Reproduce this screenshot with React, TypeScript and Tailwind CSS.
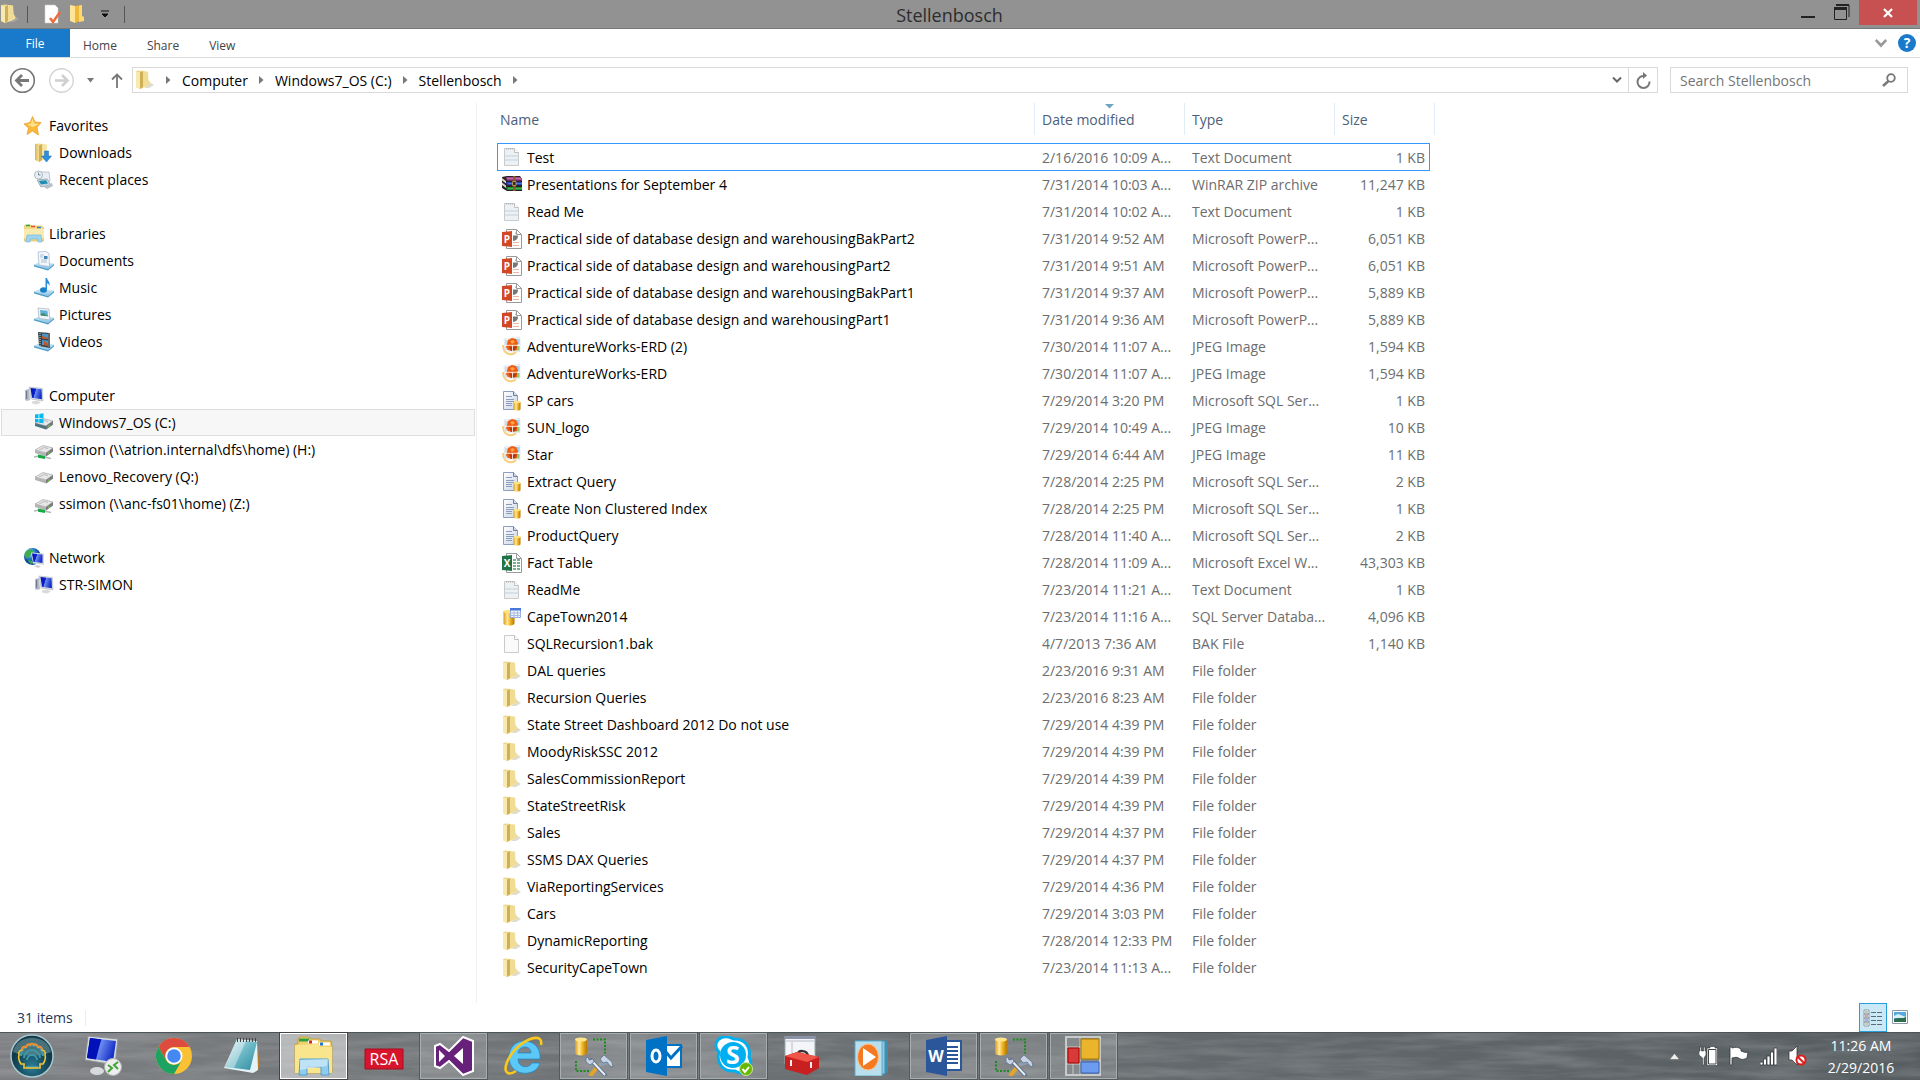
import type { ReactNode } from "react"

type FileKind = "text" | "rar" | "ppt" | "jpeg" | "sql" | "excel" | "database" | "blank" | "folder"

type FileRow = {
    name: string
    date: string
    type: string
    size: string
    kind: FileKind
}

const file = (kind: FileKind, name: string, date: string, type: string, size = ""): FileRow => ({ kind, name, date, type, size })

const files: FileRow[] = [
    file("text", "Test", "2/16/2016 10:09 A...", "Text Document", "1 KB"),
    file("rar", "Presentations for September 4", "7/31/2014 10:03 A...", "WinRAR ZIP archive", "11,247 KB"),
    file("text", "Read Me", "7/31/2014 10:02 A...", "Text Document", "1 KB"),
    file("ppt", "Practical side of database design and warehousingBakPart2", "7/31/2014 9:52 AM", "Microsoft PowerP...", "6,051 KB"),
    file("ppt", "Practical side of database design and warehousingPart2", "7/31/2014 9:51 AM", "Microsoft PowerP...", "6,051 KB"),
    file("ppt", "Practical side of database design and warehousingBakPart1", "7/31/2014 9:37 AM", "Microsoft PowerP...", "5,889 KB"),
    file("ppt", "Practical side of database design and warehousingPart1", "7/31/2014 9:36 AM", "Microsoft PowerP...", "5,889 KB"),
    file("jpeg", "AdventureWorks-ERD (2)", "7/30/2014 11:07 A...", "JPEG Image", "1,594 KB"),
    file("jpeg", "AdventureWorks-ERD", "7/30/2014 11:07 A...", "JPEG Image", "1,594 KB"),
    file("sql", "SP cars", "7/29/2014 3:20 PM", "Microsoft SQL Ser...", "1 KB"),
    file("jpeg", "SUN_logo", "7/29/2014 10:49 A...", "JPEG Image", "10 KB"),
    file("jpeg", "Star", "7/29/2014 6:44 AM", "JPEG Image", "11 KB"),
    file("sql", "Extract Query", "7/28/2014 2:25 PM", "Microsoft SQL Ser...", "2 KB"),
    file("sql", "Create Non Clustered Index", "7/28/2014 2:25 PM", "Microsoft SQL Ser...", "1 KB"),
    file("sql", "ProductQuery", "7/28/2014 11:40 A...", "Microsoft SQL Ser...", "2 KB"),
    file("excel", "Fact Table", "7/28/2014 11:09 A...", "Microsoft Excel W...", "43,303 KB"),
    file("text", "ReadMe", "7/23/2014 11:21 A...", "Text Document", "1 KB"),
    file("database", "CapeTown2014", "7/23/2014 11:16 A...", "SQL Server Databa...", "4,096 KB"),
    file("blank", "SQLRecursion1.bak", "4/7/2013 7:36 AM", "BAK File", "1,140 KB"),
    file("folder", "DAL queries", "2/23/2016 9:31 AM", "File folder"),
    file("folder", "Recursion Queries", "2/23/2016 8:23 AM", "File folder"),
    file("folder", "State Street Dashboard 2012 Do not use", "7/29/2014 4:39 PM", "File folder"),
    file("folder", "MoodyRiskSSC 2012", "7/29/2014 4:39 PM", "File folder"),
    file("folder", "SalesCommissionReport", "7/29/2014 4:39 PM", "File folder"),
    file("folder", "StateStreetRisk", "7/29/2014 4:39 PM", "File folder"),
    file("folder", "Sales", "7/29/2014 4:37 PM", "File folder"),
    file("folder", "SSMS DAX Queries", "7/29/2014 4:37 PM", "File folder"),
    file("folder", "ViaReportingServices", "7/29/2014 4:36 PM", "File folder"),
    file("folder", "Cars", "7/29/2014 3:03 PM", "File folder"),
    file("folder", "DynamicReporting", "7/28/2014 12:33 PM", "File folder"),
    file("folder", "SecurityCapeTown", "7/23/2014 11:13 A...", "File folder"),
]

function Icon({ children }: { children: ReactNode }) {
    return <svg className="h-5 w-5 shrink-0" viewBox="0 0 20 20" aria-hidden="true">{children}</svg>
}

function Gradients() {
    return (
        <svg className="absolute h-0 w-0" aria-hidden="true">
            <defs>
                <linearGradient id="gold"><stop stopColor="#d99a10" /><stop offset=".35" stopColor="#ffe9a0" /><stop offset=".6" stopColor="#f3b92b" /><stop offset="1" stopColor="#b67600" /></linearGradient>
                <linearGradient id="folder"><stop stopColor="#d8b65a" /><stop offset=".3" stopColor="#f3dc8e" /><stop offset="1" stopColor="#f7e8ac" /></linearGradient>
                <linearGradient id="screen" x2="1" y2=".3"><stop stopColor="#0514b0" /><stop offset=".45" stopColor="#0a20d0" /><stop offset=".5" stopColor="#6d8cf0" /><stop offset="1" stopColor="#1630c8" /></linearGradient>
                <linearGradient id="tray" x2="0" y2="1"><stop stopColor="#d4ecf8" /><stop offset="1" stopColor="#7fbfe2" /></linearGradient>
                <linearGradient id="sheet" x2="1" y2="1"><stop stopColor="#ffffff" /><stop offset="1" stopColor="#c8d4e4" /></linearGradient>
                <linearGradient id="teal" x2="1" y2="1"><stop stopColor="#d8f3f7" /><stop offset=".5" stopColor="#6cb8c6" /><stop offset="1" stopColor="#2f8ba0" /></linearGradient>
                <radialGradient id="orb" cy=".75"><stop stopColor="#2c7f98" /><stop offset=".6" stopColor="#175064" /><stop offset="1" stopColor="#11394a" /></radialGradient>
                <radialGradient id="globe" cx=".35" cy=".3"><stop stopColor="#bfeaff" /><stop offset=".5" stopColor="#3694d8" /><stop offset="1" stopColor="#0b4a94" /></radialGradient>
            </defs>
        </svg>
    )
}

function FolderIcon() {
    return (
        <Icon>
            <path d="M13 11l6 4-5 3h-4z" fill="#b9b9b0" opacity=".5" />
            <path d="M1 1l4-.5 8 1 1 13.5-3 2-6 2-4-2z" fill="url(#folder)" />
            <path d="M1 1l4 1.5V19l-4-2z" fill="#f8e9ae" />
            <path d="M5 2.5L8 1v16l-3 2z" fill="#cfae58" />
            <path d="M8 1.5l5 .5v13l-5 2z" fill="#f0dc94" />
            <path d="M13 10c2 1 3 3 2 5l-3 1z" fill="#efdd9c" />
        </Icon>
    )
}

function ComputerIcon() {
    return (
        <Icon>
            <path d="M1 4l4-1 1 11-3 1-2-1z" fill="#b4bcc8" />
            <path d="M2 5l1.200-.3v8L2 13z" fill="#6e7b8c" />
            <path d="M5 1l13.500 1.500.5 12.500L7 13z" fill="#d5d9df" stroke="#a5adb8" strokeWidth=".5" />
            <path d="M6.500 2l11 1.300.5 10L8 11.700z" fill="url(#screen)" />
            <path d="M8 15.500l5-1 4 2-4 2-5-1z" fill="#dadada" />
        </Icon>
    )
}

function Tray() {
    return (
        <>
            <path d="M0 14l6-2.500L20 13l-6 5z" fill="url(#tray)" stroke="#9fd0ea" strokeWidth=".5" />
            <path d="M0 14l14 4 6-5v1.500l-6 5L0 15.500z" fill="#4d9cc8" />
        </>
    )
}

function Drive({ network = false, os = false }: { network?: boolean, os?: boolean }) {
    return (
        <Icon>
            {network && <path d="M0 17l5-1 12 2.500" stroke="#b4b4b4" strokeWidth="1.500" fill="none" />}
            <path d="M1 10l8-4.500L19 8l-7 5z" fill="#e6e6e6" stroke="#999" strokeWidth=".6" />
            <path d="M1 10l11 3 7-5v3.500l-7 5L1 13z" fill={os ? "#4b7480" : "#b4b4b4"} />
            <path d="M12 13l7-5v3.500l-7 5z" fill="#7c7c7c" />
            <path d="M5 10l5-2.500 4 1" stroke="#bdbdbd" fill="none" />
            <path d="M14 13l1.500-1v1.300l-1.500 1z" fill="#64d840" />
            {network && <path d="M4 14.500l7 1.500v3l-7-1.200z" fill="#18a845" />}
            {os && <path d="M1 1.500l3.500-.5v3.900H1zM5.300.9L9.500.3v4.600H5.300zM1 5.800h3.500v3.700L1 9zM5.300 5.800h4.200v4.500l-4.200-.6z" fill="#00bcf2" />}
        </Icon>
    )
}

function FileIcon({ kind }: { kind: FileKind }) {
    if (kind === "folder") return <FolderIcon />
    if (kind === "text" || kind === "blank") {
        return (
            <Icon>
                <path d="M2.500 1.500h10l4 4v13h-14z" fill={kind === "text" ? "#eef1f4" : "#fafafa"} stroke="#c8cacc" />
                <path d="M12.500 1.500v4h4" fill="#fff" stroke="#bdbfc2" />
                {kind === "text" && <path d="M3 8h13v2H3zM3 12h13v2H3z" fill="#d6e2ea" />}
                {kind === "text" && <path d="M4 2h8" stroke="#a5a9ad" strokeDasharray="1 1" />}
            </Icon>
        )
    }
    if (kind === "rar") {
        return (
            <Icon>
                <path d="M0 2l5-1h13l2 3v12H5L0 13z" fill="#2b2024" />
                <path d="M4 2h14l2 2v1.500H5z" fill="#a9408f" />
                <path d="M4 7h16v3H5z" fill="#2444c8" />
                <path d="M4 12h16v3H5z" fill="#16902c" />
                <path d="M5 3.500h14M6 8.500h14M6 13.500h14" stroke="#fff" strokeWidth=".5" opacity=".5" />
                <path d="M0 3l4 3v2.500L0 5.500zM0 7.500l4 3V13l-4-3z" fill="#d9d4cc" />
                <path d="M11 1h2.500v15H11z" fill="#8a5a2c" />
                <path d="M10.500 6.500h3.500v4h-3.500z" fill="#3a2716" stroke="#d8b45a" strokeWidth=".7" />
            </Icon>
        )
    }
    if (kind === "ppt" || kind === "excel") {
        const color = kind === "ppt" ? "#d24726" : "#217346"
        return (
            <Icon>
                <path d="M4.500.5h10l5 5v14h-15z" fill="#fff" stroke="#9a9a9a" />
                <path d="M14.500.5v5h5" fill="none" stroke="#9a9a9a" />
                {kind === "ppt" && (
                    <>
                        <path d="M11 12V6.500h5a5 5 0 0 1-5 5.500z" fill="#777" />
                        <path d="M13 5V2a3 3 0 0 0 3 3z" fill="#e8977f" />
                        <path d="M11 13.500h6M11 16.500h6" stroke="#f0b49f" />
                    </>
                )}
                {kind === "excel" && <path d="M11 7h3M15 7h3M11 10h3M15 10h3M11 13h3M15 13h3M11 16h3M15 16h3" stroke="#74b58e" strokeWidth="2" />}
                <path d="M0 3l10-1v16L0 17z" fill={color} />
                <text x="5" y="13.500" textAnchor="middle" fontSize="10" fontWeight="700" fill="#fff" fontFamily="Open Sans, sans-serif">{kind === "ppt" ? "P" : "X"}</text>
            </Icon>
        )
    }
    if (kind === "jpeg") {
        return (
            <Icon>
                <path d="M1 8c0 10 9 11 13 7" fill="none" stroke="#f7cf7c" strokeWidth="2" />
                <path d="M2 2l16-1.500v14L3 14z" fill="#f2f5f8" stroke="#d8dce0" strokeWidth=".6" />
                <path d="M12 2h5.500v5.500H12z" fill="#9fd0f2" />
                <path d="M12 9h5.500v4.500H12z" fill="#8cc870" />
                <path d="M3 3h5v5H3zM3 9h5v4H3z" fill="#cfdfe9" />
                <path d="M6 3l4-2 4 1 2 4-1 4 0 3-5 1-4-1-2-3 1-3z" fill="#ee5d12" />
                <path d="M7 9l3 1 5-1-2 4-4 1z" fill="#b03a10" />
                <path d="M3 8.300h15M10.500 8v6" stroke="#fff" strokeWidth=".8" />
                <path d="M8 4l3-1 2 2-3 2z" fill="#ffa04a" />
            </Icon>
        )
    }
    if (kind === "sql") {
        return (
            <Icon>
                <path d="M1.500.5h10l4 4v14h-14z" fill="url(#sheet)" stroke="#8d9fc0" />
                <path d="M11.500.5v4h4" fill="#d5e0f0" stroke="#6b7ea4" />
                <path d="M4 5.500h6M4 8.500h8M4 10.500h8M4 12.500h6M4 14.500h6" stroke="#8a9cc0" />
                <path d="M11.500 11v7a3.500 1.500 0 0 0 7 0v-7z" fill="url(#gold)" />
                <ellipse cx="15" cy="11" rx="3.500" ry="1.300" fill="#ffe27a" />
            </Icon>
        )
    }
    return (
        <Icon>
            <path d="M1.500 4v12.500a5.500 2 0 0 0 11 0V4z" fill="url(#gold)" />
            <ellipse cx="7" cy="4.500" rx="5.500" ry="1.800" fill="#ffe27a" />
            <path d="M8.500 1.500h10v9h-10z" fill="#eef3fb" stroke="#8fa8dc" />
            <path d="M8 1h11v2.500H8z" fill="#4878d8" />
            <path d="M8 6h11M8 8.500h11M12 3v8M15.500 3v8" stroke="#a9bce4" />
        </Icon>
    )
}

const starIcon = (
    <Icon>
        <path d="M8.500.5l2.500 5.500 6 .5-4 5 1.500 7.500L8.500 15 3 18.500 4.500 12 0 8l6-1.500z" fill="#fbb93c" stroke="#e79a1e" strokeWidth=".7" />
        <path d="M8.500 2.500L10 7.500l5 .5-6 3-6-2.500 4-1z" fill="#ffe28c" />
    </Icon>
)

const downloadsIcon = (
    <Icon>
        <path d="M1 1l4-.5 8 1v13.500l-8 4-4-2z" fill="url(#folder)" />
        <path d="M5 2.500L8 1v16l-3 2z" fill="#cfae58" />
        <path d="M10.500 8h4v5h3l-5 6-5-6h3z" fill="#2e8fdc" stroke="#1b6db4" strokeWidth=".5" />
    </Icon>
)

const recentIcon = (
    <Icon>
        <path d="M5 2h10l1 9H6z" fill="#e8eef3" stroke="#a8b5c0" strokeWidth=".7" />
        <path d="M3 10l10-1 4 6-10 2z" fill="#c8d6e2" stroke="#8797a6" strokeWidth=".7" />
        <path d="M5 11l7-.7 2 3.200-7 1z" fill="#1d8fb0" />
        <circle cx="4.500" cy="5" r="4" fill="#eaf2f8" stroke="#9aaab8" strokeWidth=".8" />
        <path d="M4.500 2.500V5h2" stroke="#5a6b7c" fill="none" strokeWidth=".8" />
        <path d="M10 17l8-4 1 3-6 3z" fill="#b9c0c6" />
    </Icon>
)

const librariesIcon = (
    <Icon>
        <path d="M0 3l1-2h6l1 1h10l2 2v13H0z" fill="#f3db85" stroke="#d9ba5c" strokeWidth=".6" />
        <path d="M2 1.500h4" stroke="#2ea043" strokeWidth="1.500" />
        <path d="M7 2.500h4" stroke="#e04a2f" strokeWidth="1.500" />
        <path d="M13 3.500h4" stroke="#3a7bd0" strokeWidth="1.500" />
        <path d="M0 5h20v9H0z" fill="#f9ebb0" />
        <path d="M2 18l1-7h14l1 7h-4l-.5-3h-7L6 18z" fill="#9fd4ee" stroke="#6ab4dc" strokeWidth=".6" />
    </Icon>
)

const documentsIcon = (
    <Icon><Tray /><path d="M4 1l8-.5 3 2 .5 13L5 14z" fill="#f4f8fc" stroke="#9fb3c8" strokeWidth=".7" /><path d="M6 4h4M6 6h3M7 9h6M7 11h6" stroke="#a9bdd0" /><path d="M10 5h3.500v3H10z" fill="#3f84b8" /></Icon>
)

const musicIcon = (
    <Icon><Tray /><ellipse cx="9.500" cy="12" rx="3.500" ry="2.800" fill="#1c7fc8" /><path d="M11.500 12V0h1.500c0 2 3.500 4 2.500 8-.5-2-1.500-2.500-2.500-2.500V12z" fill="#2a8fd6" /></Icon>
)

const picturesIcon = (
    <Icon><Tray /><path d="M4 3l11 1 1 11-11-1.500z" fill="#f0f4f8" stroke="#a0b0c0" strokeWidth=".7" /><path d="M6 5l7.500.8.600 5.700-7.500-1z" fill="#5fb0dc" /><path d="M6.500 9l3-1 4.500 3-7-.5z" fill="#3f8c5a" /></Icon>
)

const videosIcon = (
    <Icon><Tray /><path d="M4 0l12 1v15L5 14z" fill="#3b4148" /><path d="M8 1.500l6 .5v5l-6-.5zM8 8l6 .5v5L8 13z" fill="#4b94c8" /><path d="M8 4l6 2v1l-6-.5zM10 9l4 3v2l-4-1z" fill="#c4561e" /><path d="M6 1v13M15 1.500v13" stroke="#d0d4d8" strokeDasharray="1 1" /></Icon>
)

const networkIcon = (
    <Icon>
        <circle cx="8.500" cy="8.500" r="8.500" fill="url(#globe)" />
        <path d="M3 3c4-3 6-1 6 1S6 7 5 9s-3 1-4-1 0-4 2-5zM4 12l4 1 1 3c-2 0-4-1-5-4z" fill="#3fae49" />
        <path d="M7 4.500l13 1V17L9 15.500z" fill="#d5d9df" />
        <path d="M8 5.500l10.500 1V15L9.500 13.800z" fill="url(#screen)" />
        <path d="M10 18l4-1 3 1.500-3 1.500z" fill="#d0d0d0" />
    </Icon>
)

type NavItem = { label: string, icon: ReactNode, active?: boolean }
type NavGroup = NavItem & { items: NavItem[] }

const navigation: NavGroup[] = [
    { label: "Favorites", icon: starIcon, items: [{ label: "Downloads", icon: downloadsIcon }, { label: "Recent places", icon: recentIcon }] },
    {
        label: "Libraries", icon: librariesIcon, items: [
            { label: "Documents", icon: documentsIcon },
            { label: "Music", icon: musicIcon },
            { label: "Pictures", icon: picturesIcon },
            { label: "Videos", icon: videosIcon },
        ],
    },
    {
        label: "Computer", icon: <ComputerIcon />, items: [
            { label: "Windows7_OS (C:)", icon: <Drive os />, active: true },
            { label: "ssimon (\\\\atrion.internal\\dfs\\home) (H:)", icon: <Drive network /> },
            { label: "Lenovo_Recovery (Q:)", icon: <Drive /> },
            { label: "ssimon (\\\\anc-fs01\\home) (Z:)", icon: <Drive network /> },
        ],
    },
    { label: "Network", icon: networkIcon, items: [{ label: "STR-SIMON", icon: <ComputerIcon /> }] },
]

function TitleBar() {
    return (
        <header className="flex h-[29px] items-center border-b border-[#787878] bg-[#929292]">
            <div className="flex flex-1 items-center gap-[7px]">
                <FolderIcon />
                <span className="h-[17px] w-px bg-[#555]" />
                <button aria-label="Properties" className="ml-2">
                    <Icon><path d="M2 1h10l3 3v15H2z" fill="#fff" stroke="#ccc" strokeWidth=".6" /><path d="M7 14l3 4 7-10" fill="none" stroke="#ee6c3c" strokeWidth="2.500" /></Icon>
                </button>
                <button aria-label="New folder">
                    <Icon><path d="M0 1l5 1v17l-5-2z" fill="#ffe59a" /><path d="M5 2l7-1v15l-7 3z" fill="#efb93b" /><path d="M9 2l3-1v11l2 1v4l-5 1z" fill="#ffd970" /></Icon>
                </button>
                <button aria-label="Customize Quick Access Toolbar" className="px-1">
                    <svg width="8" height="8" viewBox="0 0 8 8"><path d="M0 1h8M1 4h6L4 7z" stroke="#111" fill="#111" /></svg>
                </button>
                <span className="ml-1 h-[17px] w-px bg-[#555]" />
            </div>
            <h1 className="mr-[18px] pt-px text-[18px] leading-6 text-[#2d2d2d]">Stellenbosch</h1>
            <div className="flex h-full flex-1 items-start justify-end pr-[3px]">
                <button aria-label="Minimize" className="flex h-[26px] w-[34px] items-center justify-center">
                    <svg width="14" height="16" viewBox="0 0 14 16"><path d="M0 11h14v2H0z" fill="#222" /></svg>
                </button>
                <button aria-label="Restore" className="flex h-6 w-[34px] items-center justify-center">
                    <svg width="16" height="16" viewBox="0 0 16 16"><path d="M2 1h13v12M.5 4v11.500h12V4z" stroke="#222" fill="none" /><path d="M2 0h13v2H2zM0 3h13v3H0z" fill="#222" /></svg>
                </button>
                <button aria-label="Close" className="flex h-[25px] w-[58px] items-center justify-center bg-[#c75050]">
                    <svg width="10" height="10" viewBox="0 0 10 10"><path d="M1 1l8 8M9 1L1 9" stroke="#fff" strokeWidth="2.200" /></svg>
                </button>
            </div>
        </header>
    )
}

function Ribbon() {
    return (
        <nav className="flex h-[29px] items-stretch border-b border-[#dadbdc] text-[12px] text-[#444]">
            <button className="w-[70px] bg-[#1979ca] pt-px text-white">File</button>
            <div className="flex flex-1 items-center gap-[30px] px-[13px] pt-[5px]">
                <button>Home</button>
                <button>Share</button>
                <button>View</button>
            </div>
            <div className="flex items-center gap-[11px] pr-1">
                <button aria-label="Expand the Ribbon">
                    <svg width="12" height="10" viewBox="0 0 12 10"><path d="M.8 2L6 7.500 11.200 2" fill="none" stroke="#999" strokeWidth="2.600" /></svg>
                </button>
                <button aria-label="Help" className="flex h-[18px] w-[18px] items-center justify-center rounded-full bg-[#1979ca] text-[14px] font-bold leading-[18px] text-white">?</button>
            </div>
        </nav>
    )
}

function CrumbArrow() {
    return <svg className="shrink-0" width="5" height="8" viewBox="0 0 5 8"><path d="M0 0v8l4.500-4z" fill="#777" /></svg>
}

function Crumb({ children }: { children: string }) {
    return (
        <>
            <a href="#" className="text-black">{children}</a>
            <CrumbArrow />
        </>
    )
}

function AddressBar() {
    return (
        <div className="flex h-11 items-center pr-3">
            <div className="flex w-[132px] shrink-0 items-center pl-[9px]">
                <button aria-label="Back">
                    <svg width="27" height="27" viewBox="0 0 27 27"><circle cx="13.500" cy="13.500" r="11.800" fill="none" stroke="#777" strokeWidth="1.600" /><path d="M20 13.500H9M13 8l-5.500 5.500L13 19" fill="none" stroke="#777" strokeWidth="2.800" /></svg>
                </button>
                <button aria-label="Forward" className="ml-3">
                    <svg width="27" height="27" viewBox="0 0 27 27"><circle cx="13.500" cy="13.500" r="11.800" fill="none" stroke="#d4d4d4" strokeWidth="1.400" /><path d="M7 13.500h11M14 8l5.500 5.500L14 19" fill="none" stroke="#d0d0d0" strokeWidth="2.600" /></svg>
                </button>
                <button aria-label="Recent locations" className="ml-3">
                    <svg width="7" height="5" viewBox="0 0 7 5"><path d="M0 0h7L3.500 4.500z" fill="#777" /></svg>
                </button>
                <button aria-label="Up" className="ml-[17px]">
                    <svg width="12" height="15" viewBox="0 0 12 15"><path d="M6 15V2M1 6.500L6 1.500l5 5" fill="none" stroke="#777" strokeWidth="1.800" /></svg>
                </button>
            </div>
            <div className="flex h-[26px] flex-1 items-center border border-[#d9d9d9]">
                <div className="flex flex-1 items-center gap-[11px] pl-[2px]">
                    <FolderIcon />
                    <CrumbArrow />
                    <Crumb>Computer</Crumb>
                    <Crumb>Windows7_OS (C:)</Crumb>
                    <Crumb>Stellenbosch</Crumb>
                </div>
                <button aria-label="Previous locations" className="px-[6px]">
                    <svg width="10" height="8" viewBox="0 0 10 8"><path d="M1 1.500l4 4 4-4" fill="none" stroke="#666" strokeWidth="2" /></svg>
                </button>
                <button aria-label="Refresh" className="flex h-full w-[29px] items-center justify-center border-l border-[#d9d9d9]">
                    <svg width="15" height="17" viewBox="0 0 15 17"><path d="M8.500 4a6 6 0 1 0 5 5.500" fill="none" stroke="#777" strokeWidth="2" /><path d="M7 0l4 3.500L7 7z" fill="#777" /></svg>
                </button>
            </div>
            <div className="ml-3 flex h-[26px] w-[238px] items-center border border-[#d9d9d9] pl-[9px] pr-[11px]">
                <input aria-label="Search Stellenbosch" placeholder="Search Stellenbosch" className="min-w-0 flex-1 bg-transparent outline-none placeholder:text-[#757575]" />
                <button aria-label="Search">
                    <svg width="14" height="14" viewBox="0 0 14 14"><circle cx="9" cy="5" r="3.800" fill="none" stroke="#777" strokeWidth="1.800" /><path d="M6.500 8L1 13" stroke="#777" strokeWidth="2.400" /></svg>
                </button>
            </div>
        </div>
    )
}

function Sidebar() {
    return (
        <aside className="flex w-[477px] shrink-0 flex-col gap-[27px] border-r border-[#f0f0f0] pt-[9px]">
            {navigation.map((group) => (
                <div key={group.label}>
                    <a href="#" className="flex h-[27px] items-center gap-[5px] pl-6">{group.icon}{group.label}</a>
                    {group.items.map((item) => (
                        <a href="#" key={item.label} className={item.active ? "mx-px flex h-[27px] items-center gap-[5px] border border-[#dedede] bg-[#f7f7f7] pl-8" : "flex h-[27px] items-center gap-[5px] pl-[34px]"}>
                            {item.icon}{item.label}
                        </a>
                    ))}
                </div>
            ))}
        </aside>
    )
}

function ColumnHeader({ label, sorted, span, first }: { label: string, sorted?: boolean, span?: number, first?: boolean }) {
    return (
        <th colSpan={span} className="relative h-10 p-0 align-top font-normal">
            <div className={first ? "flex h-8 items-center pl-[3px] text-left" : "flex h-8 items-center border-l border-[#e3edf7] pl-[7px] text-left"}>{label}</div>
            {sorted && <svg className="absolute left-[71px] top-[1px]" width="9" height="5" viewBox="0 0 9 5"><path d="M0 0h9L4.500 4.500z" fill="#6fa5c4" /></svg>}
        </th>
    )
}

function FileList() {
    return (
        <main className="min-w-0 flex-1 overflow-hidden pl-5">
            <table className="w-[938px] table-fixed border-separate border-spacing-0 whitespace-nowrap">
                <colgroup>
                    <col />
                    <col className="w-[150px]" />
                    <col className="w-[150px]" />
                    <col className="w-[96px]" />
                    <col className="w-[5px]" />
                </colgroup>
                <thead className="text-[#4c607a]">
                    <tr>
                        <ColumnHeader label="Name" first />
                        <ColumnHeader label="Date modified" sorted />
                        <ColumnHeader label="Type" />
                        <th colSpan={2} className="h-10 p-0 align-top font-normal">
                            <div className="flex h-8 items-center border-x border-[#e3edf7] pl-[7px]">Size</div>
                        </th>
                    </tr>
                </thead>
                <tbody className="text-[#6d6d6d]">
                    {files.map((row, i) => {
                        const line = i === 0 ? "border-y border-[#3399ff]" : "border-y border-transparent"
                        return (
                            <tr key={row.name} className={i === 0 ? "h-7" : "h-[27px]"}>
                                <td className={`${line} border-l p-0 pl-1 text-black`}>
                                    <a href="#" className="flex h-[25px] items-center gap-[5px]"><FileIcon kind={row.kind} />{row.name}</a>
                                </td>
                                <td className={`${line} p-0 pl-2`}>{row.date}</td>
                                <td className={`${line} p-0 pl-2`}>{row.type}</td>
                                <td className={`${line} border-r p-0 pr-1 text-right`}>{row.size}</td>
                                <td className="p-0" />
                            </tr>
                        )
                    })}
                </tbody>
            </table>
        </main>
    )
}

function StatusBar() {
    return (
        <footer className="flex h-[29px] items-center pl-[17px] pr-3 text-[#1e395b]">
            <span className="border-r border-[#ededed] pr-3 leading-4">31 items</span>
            <div className="ml-auto flex h-full items-center gap-[5px]">
                <button aria-label="Details view" className="flex h-[29px] w-7 items-center justify-center border border-[#26a0da] bg-[#cbe8f6]">
                    <svg width="20" height="18" viewBox="0 0 20 18">
                        <path d="M1 1h5v4H1zM1 5h5v4H1zM1 9h5v4H1zM1 13h5v4H1z" fill="#fff" stroke="#8c99a6" />
                        <path d="M2 3h3" stroke="#6aa84f" /><path d="M2 7h3" stroke="#d33" /><path d="M2 11h3" stroke="#36c" /><path d="M2 15h3" stroke="#8a4" />
                        <path d="M8 3.500h5M14 3.500h5M8 7.500h5M14 7.500h5M8 11.500h5M14 11.500h5M8 15.500h5M14 15.500h5" stroke="#5a6b78" />
                    </svg>
                </button>
                <button aria-label="Thumbnails view" className="pb-[2px]">
                    <svg width="16" height="14" viewBox="0 0 16 14"><path d="M.5.5h15v13H.5z" fill="#fff" stroke="#8c99a6" /><path d="M2 2h12v10H2z" fill="#58a8e0" /><path d="M2 6l4-2 8 3v1H2z" fill="#d9f0f8" /><path d="M2 9c5-2 8 0 12-2v5H2z" fill="#2c6e4e" /></svg>
                </button>
            </div>
        </footer>
    )
}

function TaskIcon({ children }: { children: ReactNode }) {
    return <svg className="h-10 w-10" viewBox="0 0 40 40" aria-hidden="true">{children}</svg>
}

const managementIcon = (
    <TaskIcon>
        <path d="M1 3v14a6 2.500 0 0 0 12 0V3z" fill="url(#gold)" />
        <ellipse cx="7" cy="3.500" rx="6" ry="2" fill="#ffe58a" />
        <path d="M19 3.500h12v14M2 25v10h13" fill="none" stroke="#1d8a1d" strokeWidth="2" strokeDasharray="2 1.500" />
        <path d="M25 29L16 40" stroke="#e0a52a" strokeWidth="4" />
        <path d="M35 26L25 29" stroke="#8ea0b8" strokeWidth="3" />
        <path d="M16 23l16 17" stroke="#5b6f8c" strokeWidth="4" />
        <path d="M17 24l14 15" stroke="#e8eef6" strokeWidth="2" />
        <path d="M12 22l2-1 1 3 4-1 1 3-4 3-4-3zM26 23l4-4 8 7 1 5-3-1-3-4-4 1z" fill="#c8d4e4" stroke="#566a88" strokeWidth=".7" />
    </TaskIcon>
)

type Task = { label: string, icon: ReactNode, state?: "open" | "active" }

const tasks: Task[] = [
    {
        label: "Remote Desktop", icon: (
            <TaskIcon>
                <path d="M4 0l30 3-3 26-30-5z" fill="#d5dadd" stroke="#8a9298" />
                <path d="M6 2l26 3-3 21-26-4z" fill="url(#screen)" />
                <path d="M6 2l11 1.500-5 20-9-1.500z" fill="#0210b8" />
                <ellipse cx="13" cy="35" rx="7" ry="4" fill="#d7d9da" />
                <circle cx="29" cy="31" r="8.500" fill="#ededed" stroke="#b0b0b0" />
                <path d="M24 29l4 3-4 4M34 26l-4 3 4 4" fill="none" stroke="#3fa535" strokeWidth="2" />
            </TaskIcon>
        ),
    },
    {
        label: "Google Chrome", icon: (
            <TaskIcon>
                <circle cx="20" cy="20" r="18" fill="#fbc134" />
                <path d="M4.400 11A18 18 0 0 1 35.600 11H20a9 9 0 0 0-8 13z" fill="#dd4b3e" />
                <path d="M4.400 11A18 18 0 0 0 20 38l8-14a9 9 0 0 1-16 0z" fill="#1ca261" />
                <circle cx="20" cy="20" r="8.500" fill="#fff" />
                <circle cx="20" cy="20" r="6.800" fill="#4688f1" />
            </TaskIcon>
        ),
    },
    {
        label: "Notepad", icon: (
            <TaskIcon>
                <path d="M33 5l3 25-4 6-4-3z" fill="#b87a2d" />
                <path d="M13 3l20 2 1 29-5 3L0 32z" fill="#e4f4f6" />
                <path d="M13 4l20 2-7 28L1 31z" fill="url(#teal)" />
                <path d="M13 4l9 1-12 27-9-1z" fill="#fff" opacity=".4" />
                <path d="M13 4h20" stroke="#444" strokeWidth="4" strokeDasharray="1 2" />
            </TaskIcon>
        ),
    },
    {
        label: "File Explorer", state: "active", icon: (
            <TaskIcon>
                <path d="M4 3l2-2h9l1 2h10l1 2h10l1 5v27H1V8h3z" fill="#efd06c" stroke="#c5a03c" />
                <path d="M5 4h10" stroke="#2ea043" strokeWidth="3" />
                <path d="M14 6h10M25 8h11" stroke="#fff" strokeWidth="3" />
                <path d="M15 6h3" stroke="#d22" strokeWidth="3" />
                <path d="M26 8h3" stroke="#27c" strokeWidth="3" />
                <path d="M1 9l23-1 2 3h12v26H1z" fill="#f8e58c" />
                <path d="M5 39l1-16h28l1 16h-8v-8H13v8z" fill="#8ecbee" stroke="#529fd0" />
                <path d="M6 24l28-1-1 7-27 4z" fill="#dff3fc" opacity=".6" />
            </TaskIcon>
        ),
    },
    {
        label: "RSA", icon: (
            <TaskIcon>
                <path d="M1 13h38v20H1z" fill="#d8142c" stroke="#a50d20" />
                <text x="20" y="29" textAnchor="middle" fontSize="16" fontWeight="400" fill="#fff" fontFamily="Open Sans, sans-serif">RSA</text>
            </TaskIcon>
        ),
    },
    {
        label: "Visual Studio", state: "open", icon: (
            <TaskIcon>
                <path d="M29 1l10 4v30l-10 4-14-14-9 7-5-2V10l5-2 9 7z" fill="#68217a" stroke="#fff" strokeWidth="2" />
                <path d="M29 12v16l-9-8zM5 14l6 6-6 6z" fill="#fff" />
            </TaskIcon>
        ),
    },
    {
        label: "Internet Explorer", icon: (
            <TaskIcon>
                <path d="M36 23H14c0 9 11 10 14 4h8C32 42 5 41 5 21 5-1 38 0 36 23zM14 17h13c0-8-12-8-13 0z" fill="#5cc8f8" stroke="#1689cc" strokeWidth=".7" />
                <path d="M37 9C39-1 28 0 16 9 4 19-2 34 4 37c2 1 5 0 8-2" fill="none" stroke="#f8c81c" strokeWidth="2.600" />
            </TaskIcon>
        ),
    },
    { label: "SQL Server Management Studio", state: "open", icon: managementIcon },
    {
        label: "Outlook", state: "open", icon: (
            <TaskIcon>
                <path d="M20 9h17v22H20z" fill="#fff" stroke="#0072c6" strokeWidth="2" />
                <path d="M21 15l6 7 11-12" fill="none" stroke="#0072c6" strokeWidth="3" />
                <path d="M2 4l21-4v40L2 36z" fill="#0072c6" />
                <ellipse cx="12" cy="20" rx="4" ry="6" fill="none" stroke="#fff" strokeWidth="3" />
            </TaskIcon>
        ),
    },
    {
        label: "Skype", state: "open", icon: (
            <TaskIcon>
                <path d="M5 3C11-2 17 2 20 3c12 0 17 9 15 18 6 12-6 19-14 14C8 36 2 26 5 16 1 12 1 7 5 3z" fill="#fff" stroke="#00aff0" strokeWidth="3" />
                <circle cx="19" cy="19" r="13" fill="#00aff0" />
                <text x="19" y="28" textAnchor="middle" fontSize="25" fontWeight="700" fill="#fff" fontFamily="Open Sans, sans-serif">S</text>
                <circle cx="32" cy="33" r="6.500" fill="#6bb700" stroke="#c8e89c" />
                <path d="M28.500 33l2.500 3 4-5" fill="none" stroke="#fff" strokeWidth="2" />
            </TaskIcon>
        ),
    },
    {
        label: "Toolbox", icon: (
            <TaskIcon>
                <path d="M1 0h30v28H1z" fill="#f4f5f8" stroke="#9aa" />
                <path d="M1 0h30v3H1z" fill="#8c93a8" />
                <path d="M2 5h28M8 6v14" stroke="#b6bcc8" />
                <path d="M13 20c1-7 10-6 11 0" fill="none" stroke="#333" strokeWidth="2.500" />
                <path d="M1 20l12-4 22 5v11l-12 7-22-6z" fill="#c81f20" />
                <path d="M1 20l12-4 22 5-12 5z" fill="#ee5548" />
                <path d="M7 24v6M27 26v6" stroke="#eee" strokeWidth="2" />
            </TaskIcon>
        ),
    },
    {
        label: "Media Player", icon: (
            <TaskIcon>
                <path d="M6 5h28v32H6z" fill="#3e8db0" />
                <path d="M4 5h27v33H4z" fill="#8cc8e0" stroke="#3c91b5" />
                <path d="M1 5h27v35H1z" fill="#b9dfef" stroke="#5fa9c8" />
                <ellipse cx="14" cy="21" rx="10.500" ry="13" fill="#f47920" stroke="#ffc28a" />
                <path d="M9 12l13 9-13 9z" fill="#fff" />
            </TaskIcon>
        ),
    },
    {
        label: "Word", state: "open", icon: (
            <TaskIcon>
                <path d="M20 5h17v29H20z" fill="#fff" stroke="#2b579a" strokeWidth="2" />
                <path d="M23 11h11M23 15h11M23 19h11M23 23h11M23 27h11" stroke="#2b579a" strokeWidth="2" />
                <path d="M2 4l21-4v40L2 36z" fill="#2b579a" />
                <text x="12" y="26" textAnchor="middle" fontSize="16" fontWeight="700" fill="#fff" fontFamily="Open Sans, sans-serif">W</text>
            </TaskIcon>
        ),
    },
    { label: "SQL Server Management Studio 2", state: "open", icon: managementIcon },
    {
        label: "Report Builder", state: "open", icon: (
            <TaskIcon>
                <path d="M2 1h34v38H2z" fill="#858a8c" stroke="#c8caca" strokeWidth="2" />
                <path d="M2 11h34M2 28h34M9 28v10M16 1v38" stroke="#c8caca" />
                <path d="M4 12h11v15H4z" fill="#d83a3a" stroke="#a00" />
                <path d="M17 3h18v20H17z" fill="#eab42c" stroke="#a87600" />
                <path d="M17 26h18v11H17z" fill="#6c9cf0" stroke="#3a63b8" />
            </TaskIcon>
        ),
    },
]

const taskStyles = {
    active: "border-white bg-white/45 outline outline-1 outline-[#444]",
    open: "border-[#a8adaf] bg-white/15 outline outline-1 outline-[#535b5e]",
    idle: "border-transparent",
}

function Taskbar() {
    return (
        <div className="relative flex h-12 items-center bg-[#676c6f] text-white">
            <svg className="absolute inset-0 h-full w-full" aria-hidden="true">
                <defs>
                    <filter id="water"><feTurbulence type="fractalNoise" baseFrequency=".012 .11" numOctaves="4" seed="8" /><feColorMatrix values="0 0 0 0 .82 0 0 0 0 .84 0 0 0 0 .85 .9 0 0 0 -.3" /></filter>
                    <linearGradient id="shade"><stop stopColor="#7c7e81" /><stop offset=".3" stopColor="#6f7376" /><stop offset="1" stopColor="#565d60" /></linearGradient>
                </defs>
                <rect width="100%" height="100%" fill="url(#shade)" />
                <rect width="100%" height="100%" filter="url(#water)" opacity=".4" />
                <path d="M0 .5h4000" stroke="#4b5558" />
            </svg>
            <button aria-label="Start" className="relative mr-[6px] flex w-16 justify-center">
                <svg width="44" height="44" viewBox="0 0 44 44">
                    <circle cx="22" cy="22" r="21" fill="url(#orb)" stroke="#a8c6cc" strokeWidth="1.500" />
                    <path d="M3 18C7-1 37-1 41 18c-12 5-26 5-38 0z" fill="#8fb5b8" opacity=".45" />
                    <path d="M16 33h12M17 26a5 5 0 0 1 10 0M14 24a8 8 0 0 1 16 0M11 22a11 11 0 0 1 22 0" fill="none" stroke="#3f98a8" strokeWidth="2" />
                    <path d="M14 34v-4h-3c-2-3-3-6-2-9-1-3 1-5 3-5 0-3 2-4 4-3 1-3 3-3 4-2 1-2 3-2 4 0 1-1 3-1 4 2 2-1 4 0 4 3 2 0 4 2 3 5 1 3 0 6-2 9h-3v4z" fill="none" stroke="#f6c435" strokeWidth="1.600" />
                    <path d="M12 16c0-3 2-4 4-3 1-3 3-3 4-2 1-2 3-2 4 0 1-1 3-1 4 2 2-1 4 0 4 3" fill="none" stroke="#ef8732" strokeWidth="1.600" />
                </svg>
            </button>
            <div className="relative flex h-full gap-[3px]">
                {tasks.map((task) => (
                    <button key={task.label} aria-label={task.label} className={`mt-px flex h-[46px] w-[67px] items-center justify-center border ${taskStyles[task.state ?? "idle"]}`}>
                        {task.icon}
                    </button>
                ))}
            </div>
            <div className="relative ml-auto flex items-center gap-[11px]">
                <button aria-label="Show hidden icons" className="mr-2"><svg width="11" height="7" viewBox="0 0 11 7"><path d="M5.500.5l5 6H.5z" fill="#eee" stroke="#555" strokeWidth=".5" /></svg></button>
                <button aria-label="Power">
                    <svg width="19" height="20" viewBox="0 0 19 20" stroke="#33383b" strokeWidth=".6"><path d="M1 1h1.500v4h2V1H6v4h1v4l-2 3v7H3.500v-7L0 9V5h1z" fill="#fff" /><path d="M8 2h3V.5h5V2h2.500v17.500H8z" fill="#fff" /><path d="M9.500 3.500H17V18H9.500z" fill="none" stroke="#444" strokeWidth="1" /></svg>
                </button>
                <button aria-label="Action Center">
                    <svg width="20" height="20" viewBox="0 0 20 20"><path d="M1 1v18h2v-7c4-1 6-1 8 1 3 1 5 0 7-1l1-6c-3 1-4 0-7-1V3C9 1 6 1 3 2V1z" fill="#fff" stroke="#33383b" strokeWidth=".8" /></svg>
                </button>
                <button aria-label="Network">
                    <svg width="17" height="19" viewBox="0 0 17 19"><path d="M0 15h3v3H0zM3.500 12h3v6h-3zM7 9h3v9H7zM10.500 5h3v13h-3zM14 1h3v17h-3z" fill="#fff" stroke="#33383b" strokeWidth=".8" /></svg>
                </button>
                <button aria-label="Volume muted">
                    <svg width="19" height="20" viewBox="0 0 19 20"><path d="M1 5h3l5-5v19l-5-5H1z" fill="#fff" stroke="#33383b" strokeWidth=".8" /><circle cx="13" cy="14" r="4.500" fill="#fff" stroke="#e01b1b" strokeWidth="2" /><path d="M10 11l6 6" stroke="#e01b1b" strokeWidth="2" /></svg>
                </button>
                <div className="w-[102px] pr-4 pt-px text-center leading-[22px]">
                    <p>11:26 AM</p>
                    <p>2/29/2016</p>
                </div>
            </div>
        </div>
    )
}

export default function App() {
    return (
        <div className="flex min-h-screen flex-col bg-white font-['Open_Sans',sans-serif] text-[14px] text-black">
            <Gradients />
            <TitleBar />
            <Ribbon />
            <AddressBar />
            <div className="flex flex-1 pt-px">
                <Sidebar />
                <FileList />
            </div>
            <StatusBar />
            <Taskbar />
        </div>
    )
}
